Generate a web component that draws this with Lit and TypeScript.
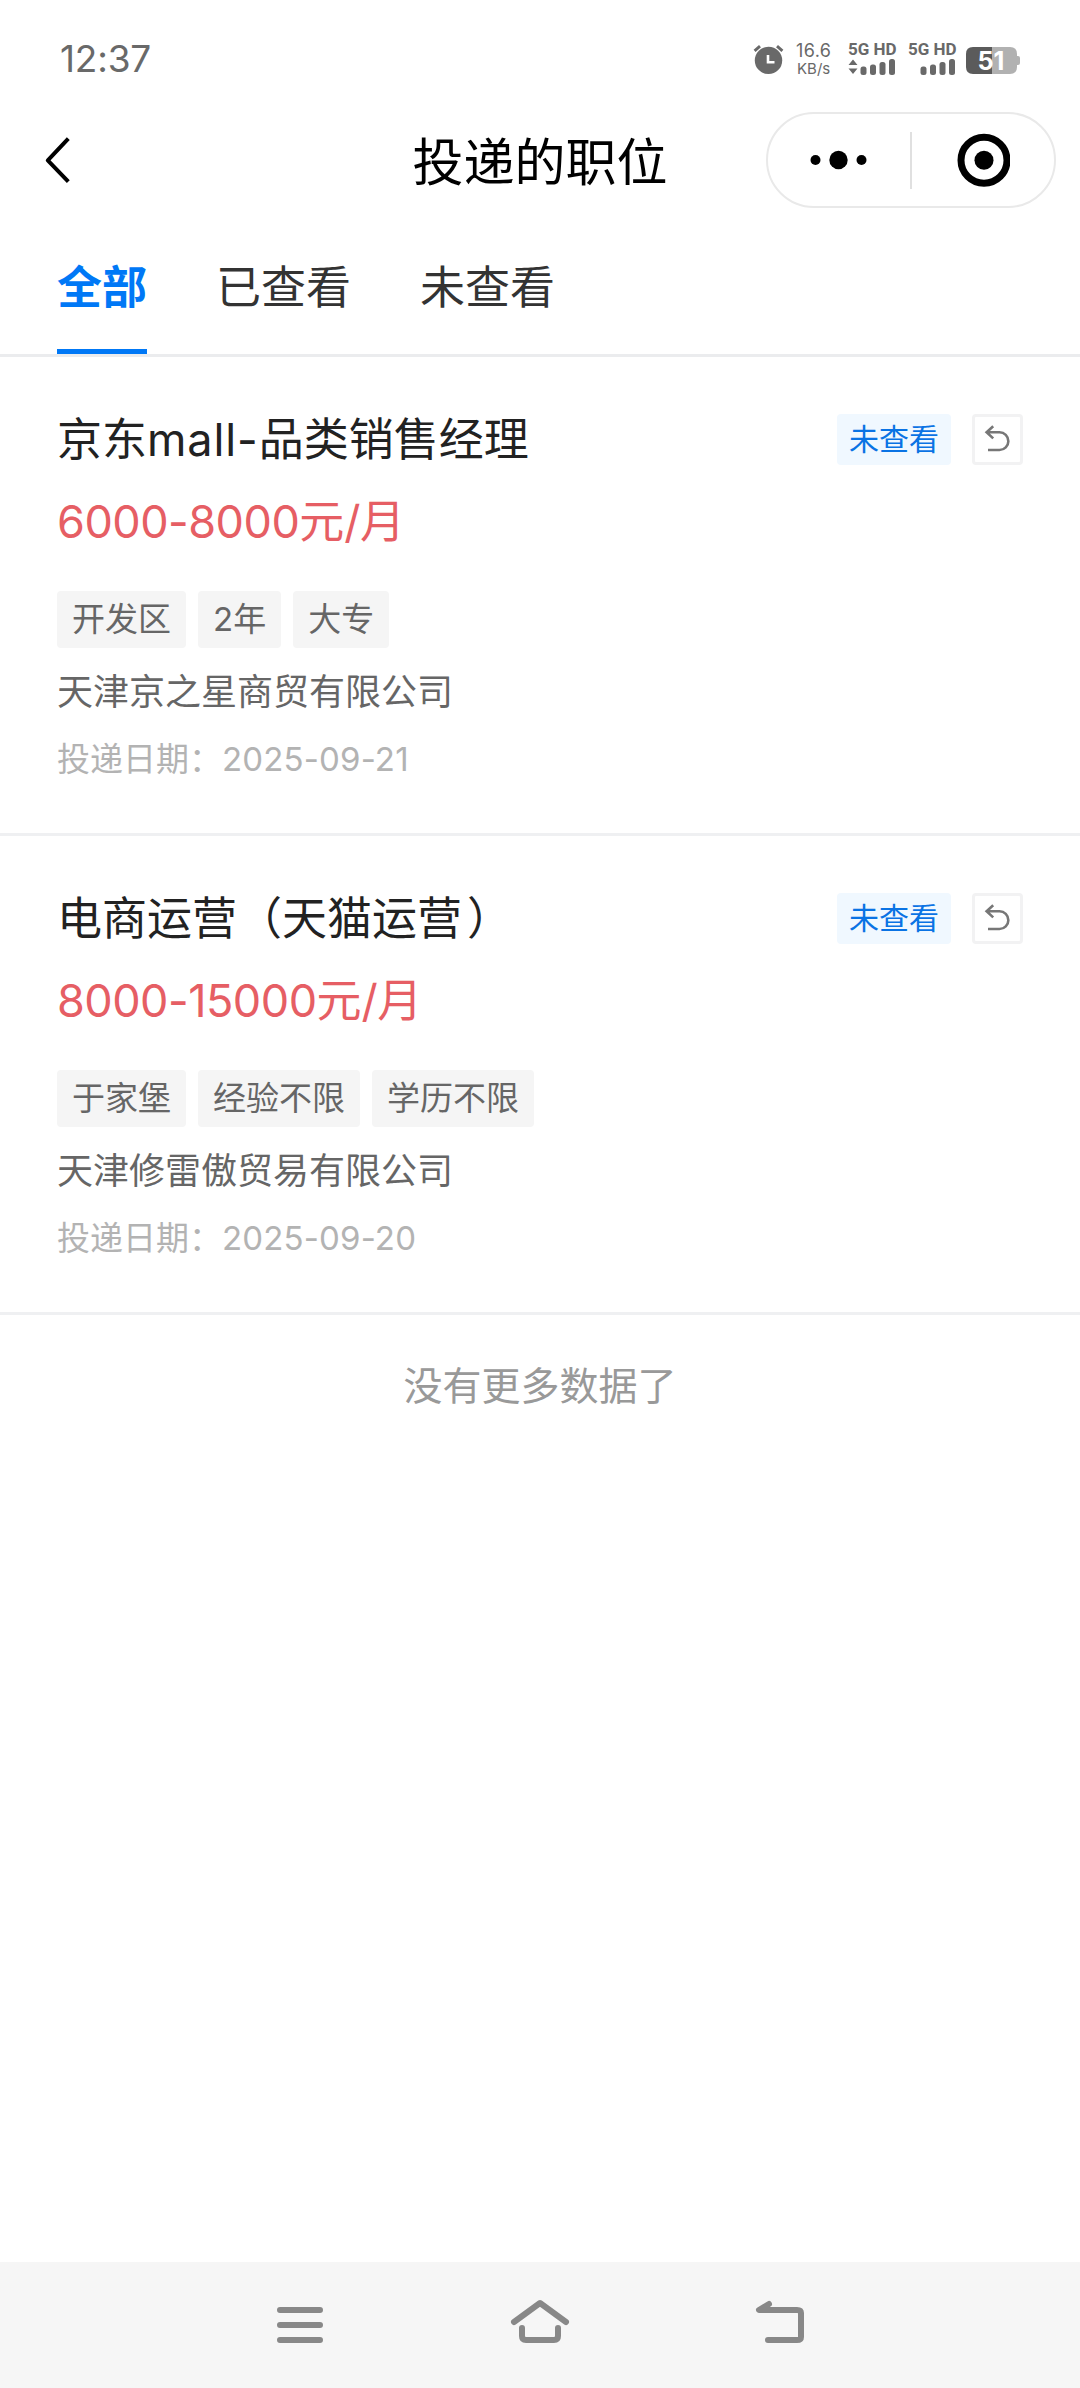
import { LitElement, html, css, svg } from "lit";
import { customElement, property, state } from "lit/decorators.js";
import { classMap } from "lit/directives/class-map.js";

interface Job {
  title: string;
  salary: string;
  tags: string[];
  company: string;
  date: string;
  status: string;
}

const JOBS: Job[] = [
  {
    title: "京东mall-品类销售经理",
    salary: "6000-8000元/月",
    tags: ["开发区", "2年", "大专"],
    company: "天津京之星商贸有限公司",
    date: "2025-09-21",
    status: "未查看",
  },
  {
    title: "电商运营（天猫运营）",
    salary: "8000-15000元/月",
    tags: ["于家堡", "经验不限", "学历不限"],
    company: "天津修雷傲贸易有限公司",
    date: "2025-09-20",
    status: "未查看",
  },
];

/** Wraps Latin runs and closing parentheses so that each can be spaced apart from the Chinese text. */
const runs = (text: string) =>
  text
    .split(/([\x21-\x7e]+|）)/)
    .filter((part) => part)
    .map((part) => {
      if (part === "）") return html`<span class="close">${part}</span>`;
      return /^[\x21-\x7e]/.test(part) ? html`<span class="latin">${part}</span>` : part;
    });

@customElement("status-bar")
export class StatusBar extends LitElement {
  static styles = css`
    :host {
      display: flex;
      justify-content: space-between;
      height: 96px;
      padding: 0 60px 0 59px;
      box-sizing: border-box;
      color: #696969;
      font-family: Inter, "Noto Sans CJK SC", sans-serif;
    }
    .time {
      padding: 36px 0 0 1px;
      font-size: 37px;
      line-height: 46px;
      letter-spacing: -0.2px;
    }
    .right {
      display: flex;
      align-items: flex-start;
      padding-top: 42px;
    }
    .alarm {
      margin-right: 12px;
    }
    .speed {
      display: flex;
      flex-direction: column;
      width: 37px;
      margin-right: 15px;
      white-space: nowrap;
    }
    .rate {
      font-size: 18px;
      line-height: 18px;
      letter-spacing: 0.4px;
    }
    .unit {
      font-size: 15px;
      line-height: 17px;
      padding-left: 1px;
    }
    .sim {
      display: flex;
      flex-direction: column;
      width: 48px;
      margin-right: 12px;
      font-family: Roboto, sans-serif;
      font-weight: 700;
      font-size: 17px;
      line-height: 15px;
      white-space: nowrap;
    }
    .sim svg,
    .alarm,
    .battery svg {
      display: block;
    }
    .battery {
      margin: 5px 0 0 -2px;
    }
    .level {
      font: 700 25px Inter, sans-serif;
    }
  `;

  private bars(activity: boolean) {
    return html`<svg width="48" height="18" viewBox="0 0 48 18" fill="#696969">
      ${activity ? svg`<path d="M0.5 8 5 2.5 9.5 8Z M0.5 11.5H9.5L5 17Z"/>` : ""}
      <rect x="12.5" y="9.5" width="6" height="8.5" rx="2.5" />
      <rect x="22" y="7.5" width="6" height="10.5" rx="2.5" />
      <rect x="31.5" y="5" width="6" height="13" rx="2.5" />
      <rect x="41" y="2" width="6" height="16" rx="2.5" />
    </svg>`;
  }

  render() {
    return html`
      <div class="time">12:37</div>
      <div class="right">
        <svg class="alarm" width="31" height="34" viewBox="0 0 31 34">
          <circle cx="15.5" cy="18.4" r="13.7" fill="#696969" />
          <path d="M1.6 8.8 7 4.2M29.4 8.8 24 4.2" stroke="#696969" stroke-width="3" />
          <path d="M15 13V20.3H21.5" fill="none" stroke="#fff" stroke-width="2.6" />
        </svg>
        <div class="speed"><span class="rate">16.6</span><span class="unit">KB/s</span></div>
        <div class="sim">5G HD ${this.bars(true)}</div>
        <div class="sim">5G HD ${this.bars(false)}</div>
        <div class="battery">
          <svg width="54" height="27" viewBox="0 0 54 27">
            <path d="M26 0H44Q51 0 51 7V9H52Q54 9 54 11V16Q54 18 52 18H51V20Q51 27 44 27H26Z" fill="#b1b1b1" />
            <path d="M26 0H7Q0 0 0 7V20Q0 27 7 27H26Z" fill="#5b5b5b" />
            <text class="level" x="11.5" y="22.5" fill="#fff" textLength="27" lengthAdjust="spacingAndGlyphs">51</text>
          </svg>
        </div>
      </div>
    `;
  }
}

@customElement("title-bar")
export class TitleBar extends LitElement {
  static styles = css`
    :host {
      display: grid;
      grid-template-columns: 1fr auto 1fr;
      align-items: center;
      height: 128px;
      padding: 0 24px 0 42px;
      box-sizing: border-box;
    }
    .back {
      display: block;
    }
    .title {
      font: 400 51px / 70px "Noto Sans CJK SC", sans-serif;
      color: #000;
      margin: 0 18px 2px 0;
    }
    .capsule {
      justify-self: end;
      display: flex;
      align-items: center;
      width: 290px;
      height: 96px;
      box-sizing: border-box;
      border: 2px solid #e9e9e9;
      border-radius: 48px;
    }
    .half {
      flex: 1;
      display: flex;
      justify-content: center;
    }
    .rule {
      width: 2px;
      height: 57px;
      background: #e0e0e0;
    }
  `;

  render() {
    return html`
      <svg class="back" width="32" height="52" viewBox="0 0 32 52">
        <path d="M26.3 4.6 5.8 26.3 26.3 47.6" fill="none" stroke="#000" stroke-width="4" stroke-linejoin="round" />
      </svg>
      <div class="title">投递的职位</div>
      <div class="capsule">
        <div class="half">
          <svg width="60" height="20" viewBox="0 0 60 20">
            <circle cx="6.5" cy="10" r="5" />
            <circle cx="29.5" cy="10" r="9.2" />
            <circle cx="52.5" cy="10" r="5" />
          </svg>
        </div>
        <div class="rule"></div>
        <div class="half">
          <svg width="54" height="54" viewBox="0 0 54 54">
            <circle cx="28" cy="27.3" r="23" fill="none" stroke="#000" stroke-width="7" />
            <circle cx="28" cy="27.3" r="9.5" />
          </svg>
        </div>
      </div>
    `;
  }
}

@customElement("filter-tabs")
export class FilterTabs extends LitElement {
  static styles = css`
    :host {
      display: flex;
      gap: 69px;
      height: 133px;
      padding: 0 57px;
      box-sizing: border-box;
      border-bottom: 3px solid #ebecee;
      font: 400 45px / 60px "Noto Sans CJK SC", sans-serif;
      color: #333;
    }
    .tab {
      box-sizing: border-box;
      padding-top: 31px;
      border-bottom: 5px solid transparent;
      cursor: pointer;
    }
    .active {
      font-weight: 700;
      color: #0078f6;
      border-bottom-color: #0078f6;
    }
  `;

  @state() private selected = 0;

  render() {
    return ["全部", "已查看", "未查看"].map(
      (label, i) => html`<div
        class=${classMap({ tab: true, active: i === this.selected })}
        @click=${() => (this.selected = i)}
      >${label}</div>`
    );
  }
}

@customElement("job-card")
export class JobCard extends LitElement {
  static styles = css`
    :host {
      display: block;
      height: 479px;
      padding: 51px 57px 0;
      box-sizing: border-box;
      border-bottom: 3px solid #eff0f2;
      font-family: Inter, "Noto Sans CJK SC", sans-serif;
      white-space: nowrap;
    }
    .head {
      display: flex;
      align-items: center;
      height: 63px;
    }
    .title {
      flex: 1;
      font-size: 45px;
      line-height: 63px;
      color: #222;
    }
    .title .latin {
      letter-spacing: 0.9px;
    }
    .close {
      margin-left: 5px;
    }
    .badge {
      padding: 0 12px;
      margin-right: 21px;
      font-size: 30px;
      line-height: 51px;
      border-radius: 4px;
      color: #0a73e4;
      background: #f0f8ff;
    }
    .undo {
      display: block;
      box-sizing: border-box;
      width: 51px;
      height: 51px;
      border: 3px solid #f2f2f3;
      border-radius: 4px;
    }
    .salary {
      margin-top: 19px;
      font-size: 45px;
      line-height: 63px;
      color: #e65e64;
    }
    .salary .latin {
      letter-spacing: -0.5px;
    }
    .tags {
      display: flex;
      gap: 12px;
      margin-top: 38px;
    }
    .tag {
      padding: 0 15px;
      font-size: 33px;
      line-height: 57px;
      border-radius: 4px;
      color: #666;
      background: #f5f5f5;
    }
    .company {
      margin-top: 19px;
      font-size: 36px;
      line-height: 50px;
      color: #666;
    }
    .date {
      margin-top: 19px;
      font-size: 33px;
      line-height: 46px;
      color: #b3b3b3;
    }
    .date .latin {
      letter-spacing: 0.15px;
    }
  `;

  @property({ attribute: false }) job!: Job;

  render() {
    const { title, salary, tags, company, date, status } = this.job;
    return html`
      <div class="head">
        <div class="title">${runs(title)}</div>
        <div class="badge">${status}</div>
        <svg class="undo" viewBox="0 0 45 45">
          <path
            d="M18.2 9.2 11.6 15.3 18.2 21.4M11.8 15.3H24.5A8.8 8.8 0 0 1 24.5 33H13"
            fill="none" stroke="#777" stroke-width="2.6"
          />
        </svg>
      </div>
      <div class="salary">${runs(salary)}</div>
      <div class="tags">${tags.map((tag) => html`<div class="tag">${runs(tag)}</div>`)}</div>
      <div class="company">${company}</div>
      <div class="date">投递日期：${runs(date)}</div>
    `;
  }
}

@customElement("system-nav")
export class SystemNav extends LitElement {
  static styles = css`
    :host {
      display: flex;
      justify-content: center;
      gap: 180px;
      height: 126px;
      padding-top: 33px;
      box-sizing: border-box;
      background: #f6f6f6;
    }
    svg {
      display: block;
      fill: none;
      stroke: #888;
      stroke-width: 6;
      stroke-linecap: round;
      stroke-linejoin: round;
    }
  `;

  render() {
    return html`
      <svg width="60" height="54" viewBox="0 0 60 54">
        <path d="M10 15H50M10 30H50M10 45H50" />
      </svg>
      <svg width="60" height="54" viewBox="0 0 60 54">
        <path d="M4 27 30 8 56 27M12 33V41Q12 45 16 45H44Q48 45 48 41V33" />
      </svg>
      <svg width="60" height="54" viewBox="0 0 60 54">
        <path d="M19 9 9 15H47Q51 15 51 18V42Q51 45 47 45H18" />
      </svg>
    `;
  }
}

@customElement("app-root")
export class AppRoot extends LitElement {
  static styles = css`
    :host {
      display: flex;
      flex-direction: column;
      width: 1080px;
      height: 2388px;
      background: #fff;
    }
    .list {
      flex: 1;
    }
    .end {
      padding-top: 40px;
      font: 400 39px / 56px "Noto Sans CJK SC", sans-serif;
      text-align: center;
      color: #999;
    }
  `;

  render() {
    return html`
      <status-bar></status-bar>
      <title-bar></title-bar>
      <filter-tabs></filter-tabs>
      <div class="list">
        ${JOBS.map((job) => html`<job-card .job=${job}></job-card>`)}
        <div class="end">没有更多数据了</div>
      </div>
      <system-nav></system-nav>
    `;
  }
}
